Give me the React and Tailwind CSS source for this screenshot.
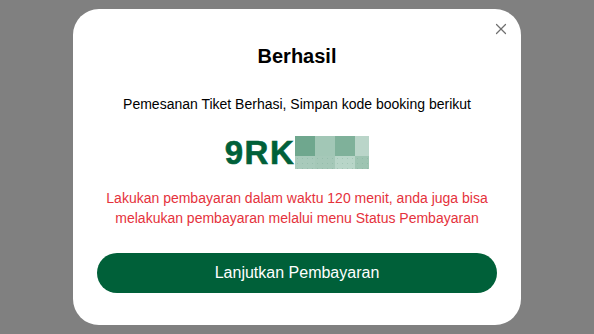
import { X } from "lucide-react";

const blocks = [
  ["bg-[#6fa78e]", "bg-[#a2c7b6]", "bg-[#7fb19a]", "bg-[#bad5c9]"],
  ["bg-[#a8cabb]", "bg-[#a5c8b8]", "bg-[#b8d5c8]", "bg-[#9ec4b2]"],
];

export default function App() {
  return (
    <div className="min-h-screen flex items-center justify-center bg-[#808080] font-['Liberation_Sans',Arial,sans-serif]">
      <div className="relative w-[448px] rounded-[26px] bg-white px-6 pt-[33px] pb-8 flex flex-col items-center">
        <button className="absolute top-[11px] right-[11px] text-[#707070]">
          <X className="size-[18px]" strokeWidth={1.6} />
        </button>
        <h2 className="text-[20px] leading-7 font-bold text-black">Berhasil</h2>
        <p className="mt-6 text-sm leading-5 text-black">
          Pemesanan Tiket Berhasi, Simpan kode booking berikut
        </p>
        <div className="mt-[22px] h-[33px] flex items-center">
          <span className="text-[33px] leading-none font-bold text-[#006039] tracking-[1.5px] [-webkit-text-stroke:0.6px_#006039]">
            9RK
          </span>
          <div className="flex flex-col h-[33px]">
            {blocks.map((row, i) => (
              <div key={i} className={`flex ${i === 0 ? "h-5" : "h-[13px]"}`}>
                {row.map((c, j) => (
                  <div
                    key={j}
                    className={`${c} ${j === 3 ? "w-[14px]" : "w-5"} ${
                      i === 1
                        ? "bg-[radial-gradient(circle,rgba(120,170,148,0.35)_0.5px,transparent_0.7px)] bg-[length:5px_5px]"
                        : ""
                    }`}
                  />
                ))}
              </div>
            ))}
          </div>
        </div>
        <p className="mt-[19px] text-sm leading-5 text-[#e5323c] text-center">
          Lakukan pembayaran dalam waktu 120 menit, anda juga bisa
          <br />
          melakukan pembayaran melalui menu Status Pembayaran
        </p>
        <button className="mt-[25px] w-full h-10 rounded-full bg-[#006039] text-white text-base">
          Lanjutkan Pembayaran
        </button>
      </div>
    </div>
  );
}
